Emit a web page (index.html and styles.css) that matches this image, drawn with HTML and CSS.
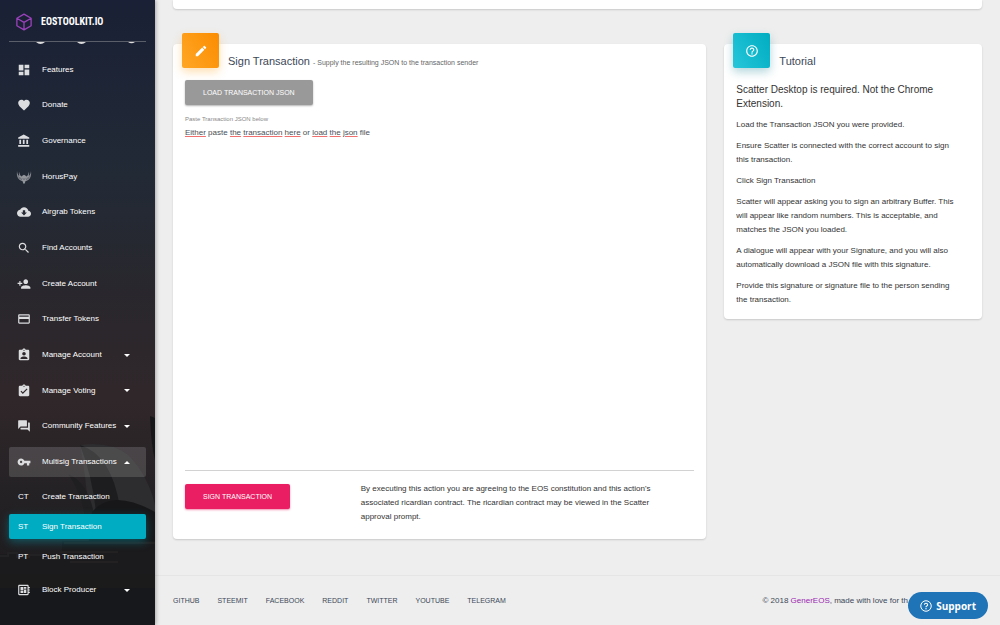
FILE: index.html
```html
<!DOCTYPE html>
<html lang="en">
<head>
<meta charset="utf-8">
<title>EOSToolkit.io - Sign Transaction</title>
<link rel="stylesheet" href="styles.css">
</head>
<body>
<div class="app">
  <aside class="sidebar">
    <svg class="scenery" viewBox="0 0 155 225" preserveAspectRatio="none" aria-hidden="true">
      <path d="M150 16 Q151 45 155 60 V18Z" fill="#161618"/>
      <path d="M80 45 Q110 41 128 55 Q148 75 155 105 V145 H90 Q88 85 80 45Z" fill="#2d2c2e"/>
      <path d="M80 45 Q112 55 120 108 L96 112 Q92 75 80 45Z" fill="#1d1d1f"/>
      <path d="M68 74 Q92 84 96 128 H86 Q84 95 68 74Z" fill="#1f1e20"/>
      <path d="M92 112 Q112 88 155 112 V150 H88Z" fill="#171719"/>
      <path d="M0 154 H62 V141 H155 V180 H0Z" fill="#1b1a1c"/>
      <path d="M64 143 H155 M60 152 H118 M70 162 H118" stroke="#232122" stroke-width="2"/>
      <path d="M0 156 h8 v-3 h9 v4 h12 v-2 h14 v4 h17" stroke="#222123" fill="none" stroke-width="2"/>
      <path d="M0 174 H155 V188 H0Z" fill="#1c1b1c"/>
      <path d="M0 188 H155 V225 H0Z" fill="#17181b"/>
    </svg>
    <a class="brand" href="#">
      <svg class="brand-mark" viewBox="0 0 24 24" aria-hidden="true"><path d="M12 1.500 21.500 7v10L12 22.500 2.500 17V7ZM2.500 7 12 12.500 21.500 7M12 12.500v10" fill="none" stroke="#9c42bd" stroke-width="1.700" stroke-linejoin="round"/></svg>
      <span>EOSTOOLKIT.IO</span>
    </a>
    <svg class="scroll-edge" viewBox="0 0 137 4" aria-hidden="true"><path d="M27 0h9q-4.500 4-9 0ZM68 0h9q-4.500 4-9 0ZM119 0h7q-3.500 2.500-7 0Z" fill="#ddd"/></svg>
    <nav class="nav">
      <ul class="nav-list">
        <li><a class="nav-link" href="#"><svg viewBox="0 0 24 24"><path d="M3 13h8V3H3v10zm0 8h8v-6H3v6zm10 0h8V11h-8v10zm0-18v6h8V3h-8z"/></svg><span>Features</span></a></li>
        <li><a class="nav-link" href="#"><svg viewBox="0 0 24 24"><path d="M12 21.350l-1.450-1.320C5.400 15.360 2 12.280 2 8.500 2 5.420 4.420 3 7.500 3c1.740 0 3.410.810 4.500 2.090C13.090 3.810 14.760 3 16.500 3 19.580 3 22 5.420 22 8.500c0 3.780-3.400 6.860-8.550 11.540L12 21.350z"/></svg><span>Donate</span></a></li>
        <li><a class="nav-link" href="#"><svg viewBox="0 0 24 24"><path d="M4 10v7h3v-7H4zm6 0v7h3v-7h-3zM2 22h19v-3H2v3zm14-12v7h3v-7h-3zm-4.500-9L2 6v2h19V6l-9.500-5z"/></svg><span>Governance</span></a></li>
        <li><a class="nav-link" href="#"><svg class="horus" viewBox="0 0 34 30"><path d="M2 2Q0 16 9 22L14 24 15 28 17 30 19 28 20 24 25 22Q34 16 32 2Q31 11 27 13Q29 8 27 4Q27 12 22 14L20 12 17 10 14 12 12 14Q7 12 7 4Q5 8 7 13Q3 11 2 2Z" fill="#92959a"/><path d="M3 13 12 19M5 17l8 4M31 13l-9 6M29 17l-8 4M14 17l3 4 3-4" stroke="#454a52" fill="none"/></svg><span>HorusPay</span></a></li>
        <li><a class="nav-link" href="#"><svg viewBox="0 0 24 24"><path d="M19.350 10.040C18.670 6.590 15.640 4 12 4 9.110 4 6.600 5.640 5.350 8.040 2.340 8.360 0 10.910 0 14c0 3.310 2.690 6 6 6h13c2.760 0 5-2.240 5-5 0-2.640-2.050-4.780-4.650-4.960zM17 13l-5 5-5-5h3V9h4v4h3z"/></svg><span>Airgrab Tokens</span></a></li>
        <li><a class="nav-link" href="#"><svg viewBox="0 0 24 24"><path d="M15.500 14h-.790l-.280-.270C15.410 12.590 16 11.110 16 9.500 16 5.910 13.090 3 9.500 3S3 5.910 3 9.500 5.910 16 9.500 16c1.610 0 3.090-.590 4.230-1.570l.270.280v.790l5 4.990L20.490 19l-4.990-5zm-6 0C7.010 14 5 11.990 5 9.500S7.010 5 9.500 5 14 7.010 14 9.500 11.990 14 9.500 14z"/></svg><span>Find Accounts</span></a></li>
        <li><a class="nav-link" href="#"><svg viewBox="0 0 24 24"><path d="M15 12c2.210 0 4-1.790 4-4s-1.790-4-4-4-4 1.790-4 4 1.790 4 4 4zm-9-2V7H4v3H1v2h3v3h2v-3h3v-2H6zm9 4c-2.670 0-8 1.340-8 4v2h16v-2c0-2.660-5.330-4-8-4z"/></svg><span>Create Account</span></a></li>
        <li><a class="nav-link" href="#"><svg viewBox="0 0 24 24"><path d="M20 4H4c-1.110 0-1.990.890-1.990 2L2 18c0 1.110.890 2 2 2h16c1.110 0 2-.890 2-2V6c0-1.110-.890-2-2-2zm0 14H4v-6h16v6zm0-10H4V6h16v2z"/></svg><span>Transfer Tokens</span></a></li>
        <li><a class="nav-link" href="#"><svg viewBox="0 0 24 24"><path d="M19 3h-4.180C14.400 1.840 13.300 1 12 1s-2.400.840-2.820 2H5c-1.100 0-2 .900-2 2v14c0 1.100.900 2 2 2h14c1.100 0 2-.900 2-2V5c0-1.100-.900-2-2-2zm-7 0c.550 0 1 .450 1 1s-.450 1-1 1-1-.450-1-1 .450-1 1-1zm0 4c1.660 0 3 1.340 3 3s-1.340 3-3 3-3-1.340-3-3 1.340-3 3-3zm6 12H6v-1.400c0-2 4-3.100 6-3.100s6 1.100 6 3.100V19z"/></svg><span>Manage Account</span><i class="caret"></i></a></li>
        <li><a class="nav-link" href="#"><svg viewBox="0 0 24 24"><path d="M19 3h-4.180C14.400 1.840 13.300 1 12 1s-2.400.840-2.820 2H5c-1.100 0-2 .900-2 2v14c0 1.100.900 2 2 2h14c1.100 0 2-.900 2-2V5c0-1.100-.900-2-2-2zm-7 0c.550 0 1 .450 1 1s-.450 1-1 1-1-.450-1-1 .450-1 1-1zm-2 14l-4-4 1.410-1.410L10 14.170l6.590-6.590L18 9l-8 8z"/></svg><span>Manage Voting</span><i class="caret"></i></a></li>
        <li><a class="nav-link" href="#"><svg viewBox="0 0 24 24"><path d="M21 6h-2v9H6v2c0 .550.450 1 1 1h11l4 4V7c0-.550-.450-1-1-1zm-4 6V3c0-.550-.450-1-1-1H3c-.550 0-1 .450-1 1v14l4-4h10c.550 0 1-.450 1-1z"/></svg><span>Community Features</span><i class="caret"></i></a></li>
        <li><a class="nav-link open" href="#" aria-expanded="true"><svg viewBox="0 0 24 24"><path d="M12.650 10C11.830 7.670 9.610 6 7 6c-3.310 0-6 2.690-6 6s2.690 6 6 6c2.610 0 4.830-1.670 5.650-4H17v4h4v-4h2v-4H12.650zM7 14c-1.100 0-2-.900-2-2s.900-2 2-2 2 .900 2 2-.900 2-2 2z"/></svg><span>Multisig Transactions</span><i class="caret up"></i></a></li>
      </ul>
      <ul class="sub-list">
        <li><a class="sub-link" href="#"><b>CT</b><span>Create Transaction</span></a></li>
        <li><a class="sub-link active" href="#" aria-current="page"><b>ST</b><span>Sign Transaction</span></a></li>
        <li><a class="sub-link" href="#"><b>PT</b><span>Push Transaction</span></a></li>
      </ul>
      <a class="nav-link" href="#"><svg viewBox="0 0 24 24"><path fill-rule="evenodd" d="M22 9V7h-2V5c0-1.100-.900-2-2-2H4c-1.100 0-2 .900-2 2v14c0 1.100.900 2 2 2h14c1.100 0 2-.900 2-2v-2h2v-2h-2v-2h2v-2h-2V9h2zm-4 10H4V5h14v14zM6 13h5v4H6zM12 7h4v3h-4zM6 7h5v5H6zM12 11h4v6h-4z"/></svg><span>Block Producer</span><i class="caret"></i></a>
    </nav>
  </aside>

  <div class="page">
    <main class="content">
      <section class="card previous"></section>
      <section class="card form-card">
        <header class="card-head">
          <span class="card-icon orange"><svg viewBox="0 0 24 24" aria-hidden="true"><path d="M3 17.250V21h3.750L17.810 9.940l-3.750-3.750L3 17.250zM20.710 7.040c.390-.390.390-1.020 0-1.410l-2.340-2.340c-.390-.390-1.020-.390-1.410 0l-1.830 1.830 3.750 3.750 1.830-1.830z"/></svg></span>
          <h1 class="card-title">Sign Transaction <small>- Supply the resulting JSON to the transaction sender</small></h1>
        </header>
        <form class="form">
          <button class="btn gray" type="button">LOAD TRANSACTION JSON</button>
          <label class="label" for="json">Paste Transaction JSON below</label>
          <div class="editor">
            <div class="marks" aria-hidden="true"><u>Either</u> paste <u>the</u> <u>transaction</u> <u>here</u> or <u>load</u> <u>the</u> <u>json</u> file</div>
            <textarea class="field" id="json" spellcheck="false">Either paste the transaction here or load the json file</textarea>
          </div>
          <div class="submit-row">
            <div><button class="btn pink" type="button">SIGN TRANSACTION</button></div>
            <p>By executing this action you are agreeing to the EOS constitution and this action's associated ricardian contract. The ricardian contract may be viewed in the Scatter approval prompt.</p>
          </div>
        </form>
      </section>
      <section class="card tutorial">
        <header class="card-head">
          <span class="card-icon teal"><svg viewBox="0 0 24 24" aria-hidden="true"><path d="M11 18h2v-2h-2v2zm1-16C6.480 2 2 6.480 2 12s4.480 10 10 10 10-4.480 10-10S17.520 2 12 2zm0 18c-4.410 0-8-3.590-8-8s3.590-8 8-8 8 3.590 8 8-3.590 8-8 8zm0-14c-2.210 0-4 1.790-4 4h2c0-1.100.900-2 2-2s2 .900 2 2c0 2-3 1.750-3 5h2c0-2.250 3-2.500 3-5 0-2.210-1.790-4-4-4z"/></svg></span>
          <h2 class="card-title">Tutorial</h2>
        </header>
        <div class="tutorial-body">
          <h3>Scatter Desktop is required. Not the Chrome Extension.</h3>
          <p>Load the Transaction JSON you were provided.</p>
          <p>Ensure Scatter is connected with the correct account to sign this transaction.</p>
          <p>Click Sign Transaction</p>
          <p>Scatter will appear asking you to sign an arbitrary Buffer. This will appear like random numbers. This is acceptable, and matches the JSON you loaded.</p>
          <p>A dialogue will appear with your Signature, and you will also automatically download a JSON file with this signature.</p>
          <p>Provide this signature or signature file to the person sending the transaction.</p>
        </div>
      </section>
    </main>
    <footer class="footer">
      <nav class="footer-links">
        <a href="#">GITHUB</a><a href="#">STEEMIT</a><a href="#">FACEBOOK</a><a href="#">REDDIT</a><a href="#">TWITTER</a><a href="#">YOUTUBE</a><a href="#">TELEGRAM</a>
      </nav>
      <p class="copyright">© 2018 <a href="#">GenerEOS</a>, made with love for th</p>
    </footer>
  </div>
  <button class="support" type="button"><svg viewBox="0 0 24 24" aria-hidden="true"><circle cx="12" cy="12" r="10.500" fill="none" stroke="#fff" stroke-width="2"/><path d="M8.700 9.500Q9 6.500 12 6.500T15.300 9.500Q15.300 11 13.500 12T12 14.500" fill="none" stroke="#fff" stroke-width="2.200"/><circle cx="12" cy="17.500" r="1.400" fill="#fff"/></svg><span>Support</span></button>
</div>
</body>
</html>
```
FILE: styles.css
```css
* { box-sizing: border-box; }
body {
  margin: 0;
  background: #eee;
  color: #3c4858;
  font: 8px/14px "Liberation Sans", Arial, sans-serif;
}
ul { margin: 0; padding: 0; list-style: none; }
h1, h2, h3, p { margin: 0; font-weight: 400; }
a { color: inherit; text-decoration: none; }
button { border: 0; font-family: inherit; }

.app { display: flex; height: 100vh; overflow: hidden; }

/* Sidebar */
.sidebar {
  position: relative;
  flex: 0 0 155px;
  padding: 0 9px;
  color: #fff;
  background: linear-gradient(#1a2035 0, #222a36 28%, #29272d 47%, #30272a 64%, #252225 78%, #18181b 100%);
  box-shadow: 1px 0 4px rgba(0, 0, 0, .3);
  z-index: 1;
}
.scenery { position: absolute; left: 0; bottom: 0; width: 100%; height: 225px; }
.brand {
  position: relative;
  display: flex;
  align-items: center;
  gap: 8px;
  height: 42px;
  padding: 2px 6px 0;
  border-bottom: 1px solid #5a5e69;
  font: bold 10px/14px "Liberation Sans Narrow", "Roboto Condensed", "Liberation Sans", sans-serif;
}
.brand-mark { width: 18px; height: 20px; }
.scroll-edge { display: block; width: 137px; height: 4px; margin-bottom: 6px; }
.nav { position: relative; }
.nav-list { display: grid; grid-auto-rows: 1fr; align-items: center; min-height: 428px; }
.nav-link {
  display: flex;
  align-items: center;
  height: 30px;
  padding: 0 16px 0 8px;
  border-radius: 2px;
  white-space: nowrap;
}
.nav-link svg { width: 14px; height: 14px; margin-right: 11px; fill: #dcdddf; }
.nav-link .horus { width: 18px; margin: 0 9px 0 -2px; }
.nav-link.open { background: rgba(200, 200, 200, .2); }
.caret { margin-left: auto; border: 3px solid transparent; border-top-color: #fff; border-bottom: 0; }
.caret.up { border-top: 0; border-bottom: 3px solid #fff; }
.sub-list { display: grid; gap: 5px; padding: 4px 0 6px; }
.sub-link { display: flex; align-items: center; height: 25px; padding: 0 9px; border-radius: 2px; white-space: nowrap; }
.sub-link b { width: 24px; font-weight: 400; }
.sub-link.active { background: #00acc1; box-shadow: 0 3px 10px rgba(0, 172, 193, .4); }

/* Content */
.page { flex: 1; min-width: 0; }
.content {
  display: grid;
  grid-template-columns: repeat(12, 1fr);
  column-gap: 18px;
  row-gap: 35px;
  align-items: start;
  padding: 0 18px 36px;
}
.card { background: #fff; border-radius: 4px; box-shadow: 0 1px 2px rgba(0, 0, 0, .16); }
.previous { grid-column: span 12; height: 9px; border-radius: 0 0 4px 4px; }
.form-card { grid-column: span 8; }
.tutorial { grid-column: span 4; }
.card-head { display: flex; gap: 9px; padding: 0 9px; height: 24px; }
.card-icon {
  display: grid;
  place-items: center;
  flex: none;
  width: 37px;
  height: 35px;
  margin-top: -11px;
  border-radius: 2px;
}
.card-icon svg { width: 14px; height: 14px; fill: #fff; }
.orange { background: linear-gradient(60deg, #ffa726, #fb8c00); box-shadow: 0 4px 10px rgba(255, 152, 0, .3); }
.teal { background: linear-gradient(60deg, #26c6da, #00acc1); box-shadow: 0 4px 10px rgba(0, 120, 140, .3); }
.card-title { padding-top: 10px; font-size: 11px; white-space: nowrap; }
.card-title small { font-size: 7px; color: #666; }

.form { padding: 12px 12px 15px; }
.btn {
  height: 25px;
  padding: 0 18px;
  border-radius: 2px;
  color: #fff;
  font-size: 7px;
  line-height: 25px;
}
.gray { background: #999; box-shadow: 0 1px 2px rgba(0, 0, 0, .3); }
.pink { background: #e91e63; box-shadow: 0 1px 2px rgba(233, 30, 99, .5); }
.label { display: block; margin-top: 7px; color: #888; font-size: 6px; }
.editor { position: relative; }
.field, .marks { font: 8px/14px "Liberation Sans", Arial, sans-serif; }
.field {
  display: block;
  width: 100%;
  height: 345px;
  padding: 0;
  border: 0;
  border-bottom: 1px solid #d2d2d2;
  outline: 0;
  background: none;
  color: #495057;
  resize: none;
}
.marks { position: absolute; inset: 0; color: transparent; pointer-events: none; }
.marks u { text-decoration: underline solid #f07070 1px; text-underline-offset: 1px; }
.submit-row { display: grid; grid-template-columns: 1fr 2fr; gap: 9px; padding-top: 13px; }
.submit-row p { margin-top: -2px; padding-right: 18px; color: #333; }

.tutorial-body { padding: 15px 12px 12px; color: #333; }
.tutorial-body h3 { font-size: 10px; line-height: 14px; }
.tutorial-body p { margin-top: 7px; padding-right: 12px; }

/* Footer */
.footer {
  display: flex;
  justify-content: space-between;
  padding: 18px 92px 18px 18px;
  border-top: 1px solid #e5e5e5;
  white-space: nowrap;
}
.footer-links { display: flex; gap: 18px; font-size: 7px; }
.copyright a { color: #9c27b0; }

.support {
  position: absolute;
  right: 12px;
  bottom: 6px;
  z-index: 2;
  display: flex;
  align-items: center;
  gap: 4px;
  height: 27px;
  padding: 0 12px;
  border-radius: 14px;
  background: #1f73b7;
  color: #fff;
  font: bold 10px/14px "Open Sans", "Noto Sans", sans-serif;
}
.support svg { width: 12px; height: 12px; }
```
